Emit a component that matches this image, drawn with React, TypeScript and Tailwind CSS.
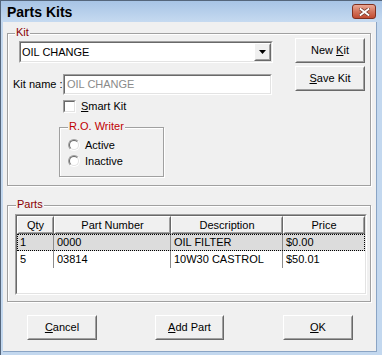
import React from "react";

type P = { className?: string; innerClassName?: string; children?: React.ReactNode };

function Raised({ className = "", innerClassName = "", children }: P) {
  return (
    <div className={`bg-[#f0f0f0] border border-white border-r-[#696969] border-b-[#696969] ${className}`}>
      <div className={`w-full h-full border border-[#f0f0f0] border-r-[#a0a0a0] border-b-[#a0a0a0] flex items-center ${innerClassName}`}>
        {children}
      </div>
    </div>
  );
}

function Sunken({ className = "", innerClassName = "", children }: P) {
  return (
    <div className={`border border-[#a0a0a0] border-r-white border-b-white ${className}`}>
      <div className={`w-full h-full border border-[#696969] border-r-[#e3e3e3] border-b-[#e3e3e3] bg-white flex ${innerClassName}`}>
        {children}
      </div>
    </div>
  );
}

function Group({ label, labelClass, labelLeft, className = "", children }: { label: string; labelClass: string; labelLeft: string; className?: string; children?: React.ReactNode }) {
  return (
    <div className={`relative border border-[#a0a0a0] shadow-[inset_1px_1px_0_#fff,1px_1px_0_#fff] ${className}`}>
      <span className={`absolute top-[-8px] ${labelLeft} px-[1px] bg-[#f0f0f0] leading-[13px] ${labelClass}`}>{label}</span>
      {children}
    </div>
  );
}

function Button({ className = "", children }: P) {
  return (
    <Raised className={`h-[25px] ${className}`} innerClassName="justify-center">
      <span className="leading-[13px]">{children}</span>
    </Raised>
  );
}

function Radio({ label }: { label: string }) {
  return (
    <div className="h-[16px] flex items-center ml-[8px]">
      <div className="w-[12px] h-[12px] rounded-full border border-[#a0a0a0] border-r-white border-b-white">
        <div className="w-full h-full rounded-full border border-[#696969] border-r-[#e3e3e3] border-b-[#e3e3e3] bg-white" />
      </div>
      <span className="ml-[5px] leading-[13px]">{label}</span>
    </div>
  );
}

const cols = [
  { name: "Qty", w: "w-[37px]" },
  { name: "Part Number", w: "w-[117px]" },
  { name: "Description", w: "w-[112px]" },
  { name: "Price", w: "w-[82px]" },
];

const rows = [
  ["1", "0000", "OIL FILTER", "$0.00"],
  ["5", "03814", "10W30 CASTROL", "$50.01"],
];

export default function App() {
  return (
    <div className="w-[382px] h-[355px] bg-[#c3d8ef] flex flex-col border-l border-t border-[#55667c] font-['Liberation_Sans',Arial,sans-serif] text-[11px] leading-[13px] text-black overflow-hidden select-none">
      {/* Title bar */}
      <div className="h-[21px] shrink-0 flex items-center bg-linear-to-b from-[#a7c4e6] to-[#c6daf0]">
        <span className="ml-[6px] text-[14px] font-bold leading-[16px]">Parts Kits</span>
        <div className="ml-auto mr-[6px] w-[24px] h-[15px] rounded-[3px] border border-[#80301f] bg-linear-to-b from-[#eaa997] via-[#d3745c] to-[#c14b31] flex items-center justify-center">
          <svg width="11" height="8" viewBox="0 0 11 8">
            <path d="M1.5 1 L9.5 7 M9.5 1 L1.5 7" stroke="#74392c" strokeWidth="3.4" strokeLinecap="square" />
            <path d="M1.5 1 L9.5 7 M9.5 1 L1.5 7" stroke="#ffffff" strokeWidth="1.8" strokeLinecap="square" />
          </svg>
        </div>
      </div>

      {/* Content */}
      <div className="flex-1 ml-[2px] mr-[5px] mb-[3px] bg-[#f0f0f0] border-r border-b border-[#8aa4c4] flex flex-col">
        {/* Kit group */}
        <Group label="Kit" labelClass="text-[#8b0000]" labelLeft="left-[7px]" className="mt-[11px] ml-[4px] w-[364px] h-[153px] shrink-0">
          <div className="flex items-start">
            <div className="flex flex-col">
              <Sunken className="mt-[7px] ml-[11px] w-[254px] h-[22px]" innerClassName="items-center">
                <span className="ml-[1px] flex-1 leading-[13px]">OIL CHANGE</span>
                <Raised className="w-[17px] h-[18px]" innerClassName="justify-center">
                  <svg width="7" height="4" viewBox="0 0 7 4">
                    <path d="M0 0 H7 L3.5 4 Z" fill="#000" />
                  </svg>
                </Raised>
              </Sunken>
              <div className="flex items-center mt-[11px]">
                <span className="ml-[5px] w-[50px] leading-[13px]">Kit name :</span>
                <Sunken className="w-[209px] h-[21px]" innerClassName="items-center">
                  <span className="ml-[2px] text-[#8a8a8a] leading-[13px]">OIL CHANGE</span>
                </Sunken>
              </div>
              <div className="flex items-center mt-[5px] ml-[55px]">
                <Sunken className="w-[13px] h-[13px]" />
                <span className="ml-[5px] leading-[13px]">
                  <span className="underline">S</span>mart Kit
                </span>
              </div>
              <Group label="R.O. Writer" labelClass="text-[#c00000]" labelLeft="left-[8px]" className="mt-[14px] ml-[51px] w-[105px] h-[50px]">
                <div className="mt-[9px] flex flex-col">
                  <Radio label="Active" />
                  <Radio label="Inactive" />
                </div>
              </Group>
            </div>
            <div className="flex flex-col ml-[22px]">
              <Button className="mt-[4px] w-[70px]">
                New <span className="underline">K</span>it
              </Button>
              <Button className="mt-[3px] w-[70px]">
                <span className="underline">S</span>ave Kit
              </Button>
            </div>
          </div>
        </Group>

        {/* Parts group */}
        <Group label="Parts" labelClass="text-[#8b0000]" labelLeft="left-[8px]" className="mt-[19px] ml-[4px] w-[364px] h-[97px] shrink-0">
          <Sunken className="mt-[8px] ml-[7px] w-[352px] h-[81px]" innerClassName="flex-col">
            <div className="flex h-[18px] shrink-0">
              {cols.map((c) => (
                <Raised key={c.name} className={`${c.w} h-full`} innerClassName="justify-center">
                  <span className="leading-[13px] text-black">{c.name}</span>
                </Raised>
              ))}
            </div>
            {rows.map((r, i) => (
              <div key={i} className={`relative flex h-[17px] shrink-0 ${i === 0 ? "bg-[#dcdcdc]" : "bg-white"}`}>
                {r.map((cell, j) => (
                  <div
                    key={j}
                    className={`${cols[j].w} h-full flex items-center pl-[3px] text-black ${j < 3 ? "border-r border-[#8c8c8c]" : ""}`}
                  >
                    <span className="leading-[13px] text-black">{cell}</span>
                  </div>
                ))}
                {i === 0 && <div className="absolute inset-0 border border-dotted border-black" />}
              </div>
            ))}
          </Sunken>
        </Group>

        {/* Bottom buttons */}
        <div className="flex mt-[13px]">
          <Button className="ml-[24px] w-[70px]">
            <span className="underline">C</span>ancel
          </Button>
          <Button className="ml-[58px] w-[69px]">
            <span className="underline">A</span>dd Part
          </Button>
          <Button className="ml-[59px] w-[70px]">
            <span className="underline">O</span>K
          </Button>
        </div>
      </div>
    </div>
  );
}
